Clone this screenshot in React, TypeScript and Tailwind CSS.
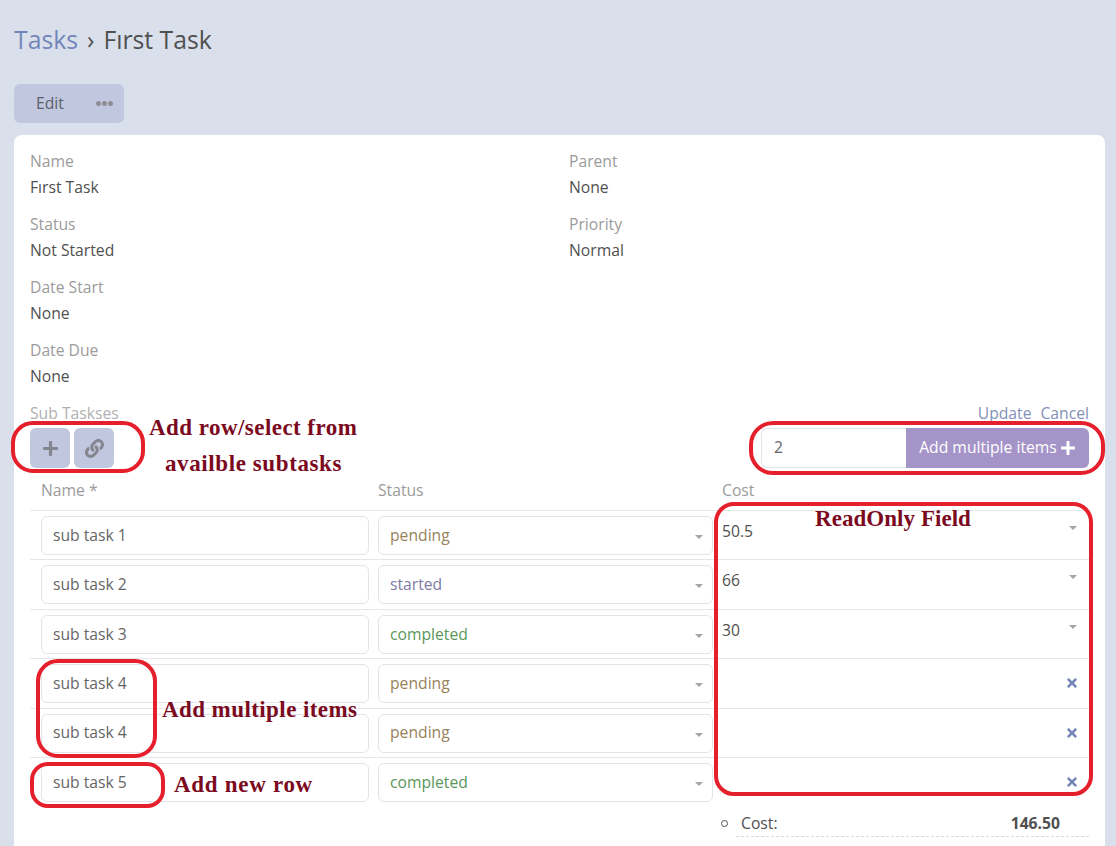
import React from 'react';
import { FaLink, FaPlus, FaTimes } from 'react-icons/fa';

const font = { fontFamily: '"Open Sans", sans-serif' };

const details = [
  [['Name', 'Fırst Task'], ['Parent', 'None']],
  [['Status', 'Not Started'], ['Priority', 'Normal']],
  [['Date Start', 'None']],
  [['Date Due', 'None']],
];

const rows = [
  { name: 'sub task 1', status: 'pending', cost: '50.5' },
  { name: 'sub task 2', status: 'started', cost: '66' },
  { name: 'sub task 3', status: 'completed', cost: '30' },
  { name: 'sub task 4', status: 'pending', cost: '' },
  { name: 'sub task 4', status: 'pending', cost: '' },
  { name: 'sub task 5', status: 'completed', cost: '' },
];

const statusColor: Record<string, string> = {
  pending: 'text-[#97825c]',
  started: 'text-[#7d7ba3]',
  completed: 'text-[#5c965c]',
};

function Caret({ className }: { className: string }) {
  return <span className={`absolute h-0 w-0 border-x-[4px] border-t-[4px] border-x-transparent border-t-[#a5a5a5] ${className}`} />;
}

function Field({ label, value }: { label: string; value: string }) {
  return (
    <div className="h-[63px] pt-[13px] text-[15.7px] leading-[26px]">
      <div className="text-[#9b9b9b]">{label}</div>
      <div className="text-[#505050]">{value}</div>
    </div>
  );
}

function Row({ name, status, cost }: { name: string; status: string; cost: string }) {
  return (
    <div className="flex h-[49.4px] border-t border-[#e6e6e9]">
      <div className="w-[343px] pl-[11px] pt-[5px]">
        <div className="flex h-[39px] w-[328px] items-center rounded-md border border-[#e3e4ea] pl-[11px] text-[15.7px] text-[#666666]">{name}</div>
      </div>
      <div className="w-[344px] pl-[5px] pt-[5px]">
        <div className={`relative flex h-[39px] w-[335px] items-center rounded-md border border-[#e3e4ea] pl-[11px] text-[15.7px] ${statusColor[status]}`}>
          {status}
          <Caret className="right-[9px] top-[18px]" />
        </div>
      </div>
      <div className="relative flex-1 pl-[5px] pt-[7px] text-[15.7px] leading-[26px] text-[#505050]">
        {cost}
        {cost ? (
          <Caret className="right-[12px] top-[15px]" />
        ) : (
          <FaTimes className="absolute right-[10px] top-[17px] h-[14px] w-[14px] text-[#7486b8]" />
        )}
      </div>
    </div>
  );
}

function Note({ className, children }: { className: string; children: React.ReactNode }) {
  return (
    <div
      className={`absolute whitespace-nowrap text-[23px] font-bold leading-none text-[#7b0a1e] ${className}`}
      style={{ fontFamily: '"Liberation Serif", serif' }}
    >
      {children}
    </div>
  );
}

export default function App() {
  return (
    <div className="relative h-[846px] overflow-hidden bg-[#d9e0ec] pl-[14px] pr-[11px]" style={font}>
      <h1 className="pt-[22px] text-[24.75px] leading-[36px] text-[#505050]">
        <span className="text-[#7486b8]">Tasks</span>
        <span className="mx-[9px]">›</span>
        Fırst Task
      </h1>

      <div className="mt-[26px] flex h-[39px] w-[110px] items-center rounded-md bg-[#c0c7de] text-[15.7px] text-[#5c5f6b]">
        <span className="ml-[22px]">Edit</span>
        <span className="ml-[32px] flex gap-[1px]">
          <span className="h-[5px] w-[5px] rounded-full bg-[#8e8e96]" />
          <span className="h-[5px] w-[5px] rounded-full bg-[#8e8e96]" />
          <span className="h-[5px] w-[5px] rounded-full bg-[#8e8e96]" />
        </span>
      </div>

      <div className="mt-[12px] h-[800px] rounded-lg bg-white px-[16px]">
        <div>
          {details.map((pair, i) => (
            <div key={i} className="grid grid-cols-[539px_1fr]">
              {pair.map(([label, value]) => (
                <Field key={label} label={label} value={value} />
              ))}
            </div>
          ))}
        </div>

        <div className="flex justify-between pt-[13px] text-[15.7px] leading-[26px]">
          <span className="text-[#b0b0b0]">Sub Taskses</span>
          <span className="text-[#8391b8]">
            <span>Update</span>
            <span className="ml-[9px]">Cancel</span>
          </span>
        </div>

        <div className="mt-[2px] flex h-[39px] justify-between">
          <div className="flex gap-[4px]">
            <button className="flex h-[40px] w-[40px] items-center justify-center rounded-md bg-[#c0c7de] text-[#85858f]">
              <FaPlus className="h-[17px] w-[17px]" />
            </button>
            <button className="flex h-[40px] w-[40px] items-center justify-center rounded-md bg-[#c0c7de] text-[#85858f]">
              <FaLink className="h-[19px] w-[19px]" />
            </button>
          </div>
          <div className="flex h-[40px] w-[328px]">
            <div className="flex w-[145px] items-center rounded-l-md border border-r-0 border-[#e3e4ea] pl-[12px] text-[15.7px] text-[#666666]">2</div>
            <div className="flex flex-1 items-center justify-center gap-[3px] rounded-r-md bg-[#a594c8] text-[15.7px] text-white">
              Add multiple items
              <FaPlus className="h-[16px] w-[16px]" />
            </div>
          </div>
        </div>

        <div className="flex h-[43px] items-end pb-[7px] text-[15.7px] leading-[26px] text-[#9b9b9b]">
          <div className="w-[348px] pl-[11px]">Name *</div>
          <div className="w-[344px]">Status</div>
          <div>Cost</div>
        </div>

        <div>
          {rows.map((row, i) => (
            <Row key={i} {...row} />
          ))}
        </div>

        <div className="mt-[4px] flex justify-end">
          <div className="flex w-[368px] items-start">
            <span className="mt-[10px] h-[7px] w-[7px] rounded-full border border-[#505050]" />
            <div className="ml-[8px] flex h-[27px] flex-1 justify-between border-b border-dashed border-[#d8d8d8] pl-[5px] pr-[29px] text-[15.7px] leading-[26px] text-[#505050]">
              <span>Cost:</span>
              <span className="font-bold">146.50</span>
            </div>
          </div>
        </div>
      </div>

      {/* annotations drawn over the page */}
      <div className="absolute left-[11px] top-[421px] h-[52px] w-[134px] rounded-[22px] border-[4px] border-[#e5202c]" />
      <div className="absolute left-[749px] top-[421px] h-[54px] w-[356px] rounded-[24px] border-[4px] border-[#e5202c]" />
      <div className="absolute left-[714px] top-[502px] h-[294px] w-[379px] rounded-[20px] border-[4px] border-[#e5202c]" />
      <div className="absolute left-[36px] top-[659px] h-[99px] w-[121px] rounded-[22px] border-[4px] border-[#e5202c]" />
      <div className="absolute left-[30px] top-[762px] h-[46px] w-[135px] rounded-[18px] border-[4px] border-[#e5202c]" />

      <Note className="left-[149px] top-[416px] tracking-[0.45px]">Add row/select from</Note>
      <Note className="left-[165px] top-[452px] tracking-[0.6px]">availble subtasks</Note>
      <Note className="left-[815px] top-[507px] tracking-[0.05px]">ReadOnly Field</Note>
      <Note className="left-[162px] top-[698px] tracking-[0.42px]">Add multiple items</Note>
      <Note className="left-[174px] top-[773px] tracking-[0.7px]">Add new row</Note>
    </div>
  );
}
